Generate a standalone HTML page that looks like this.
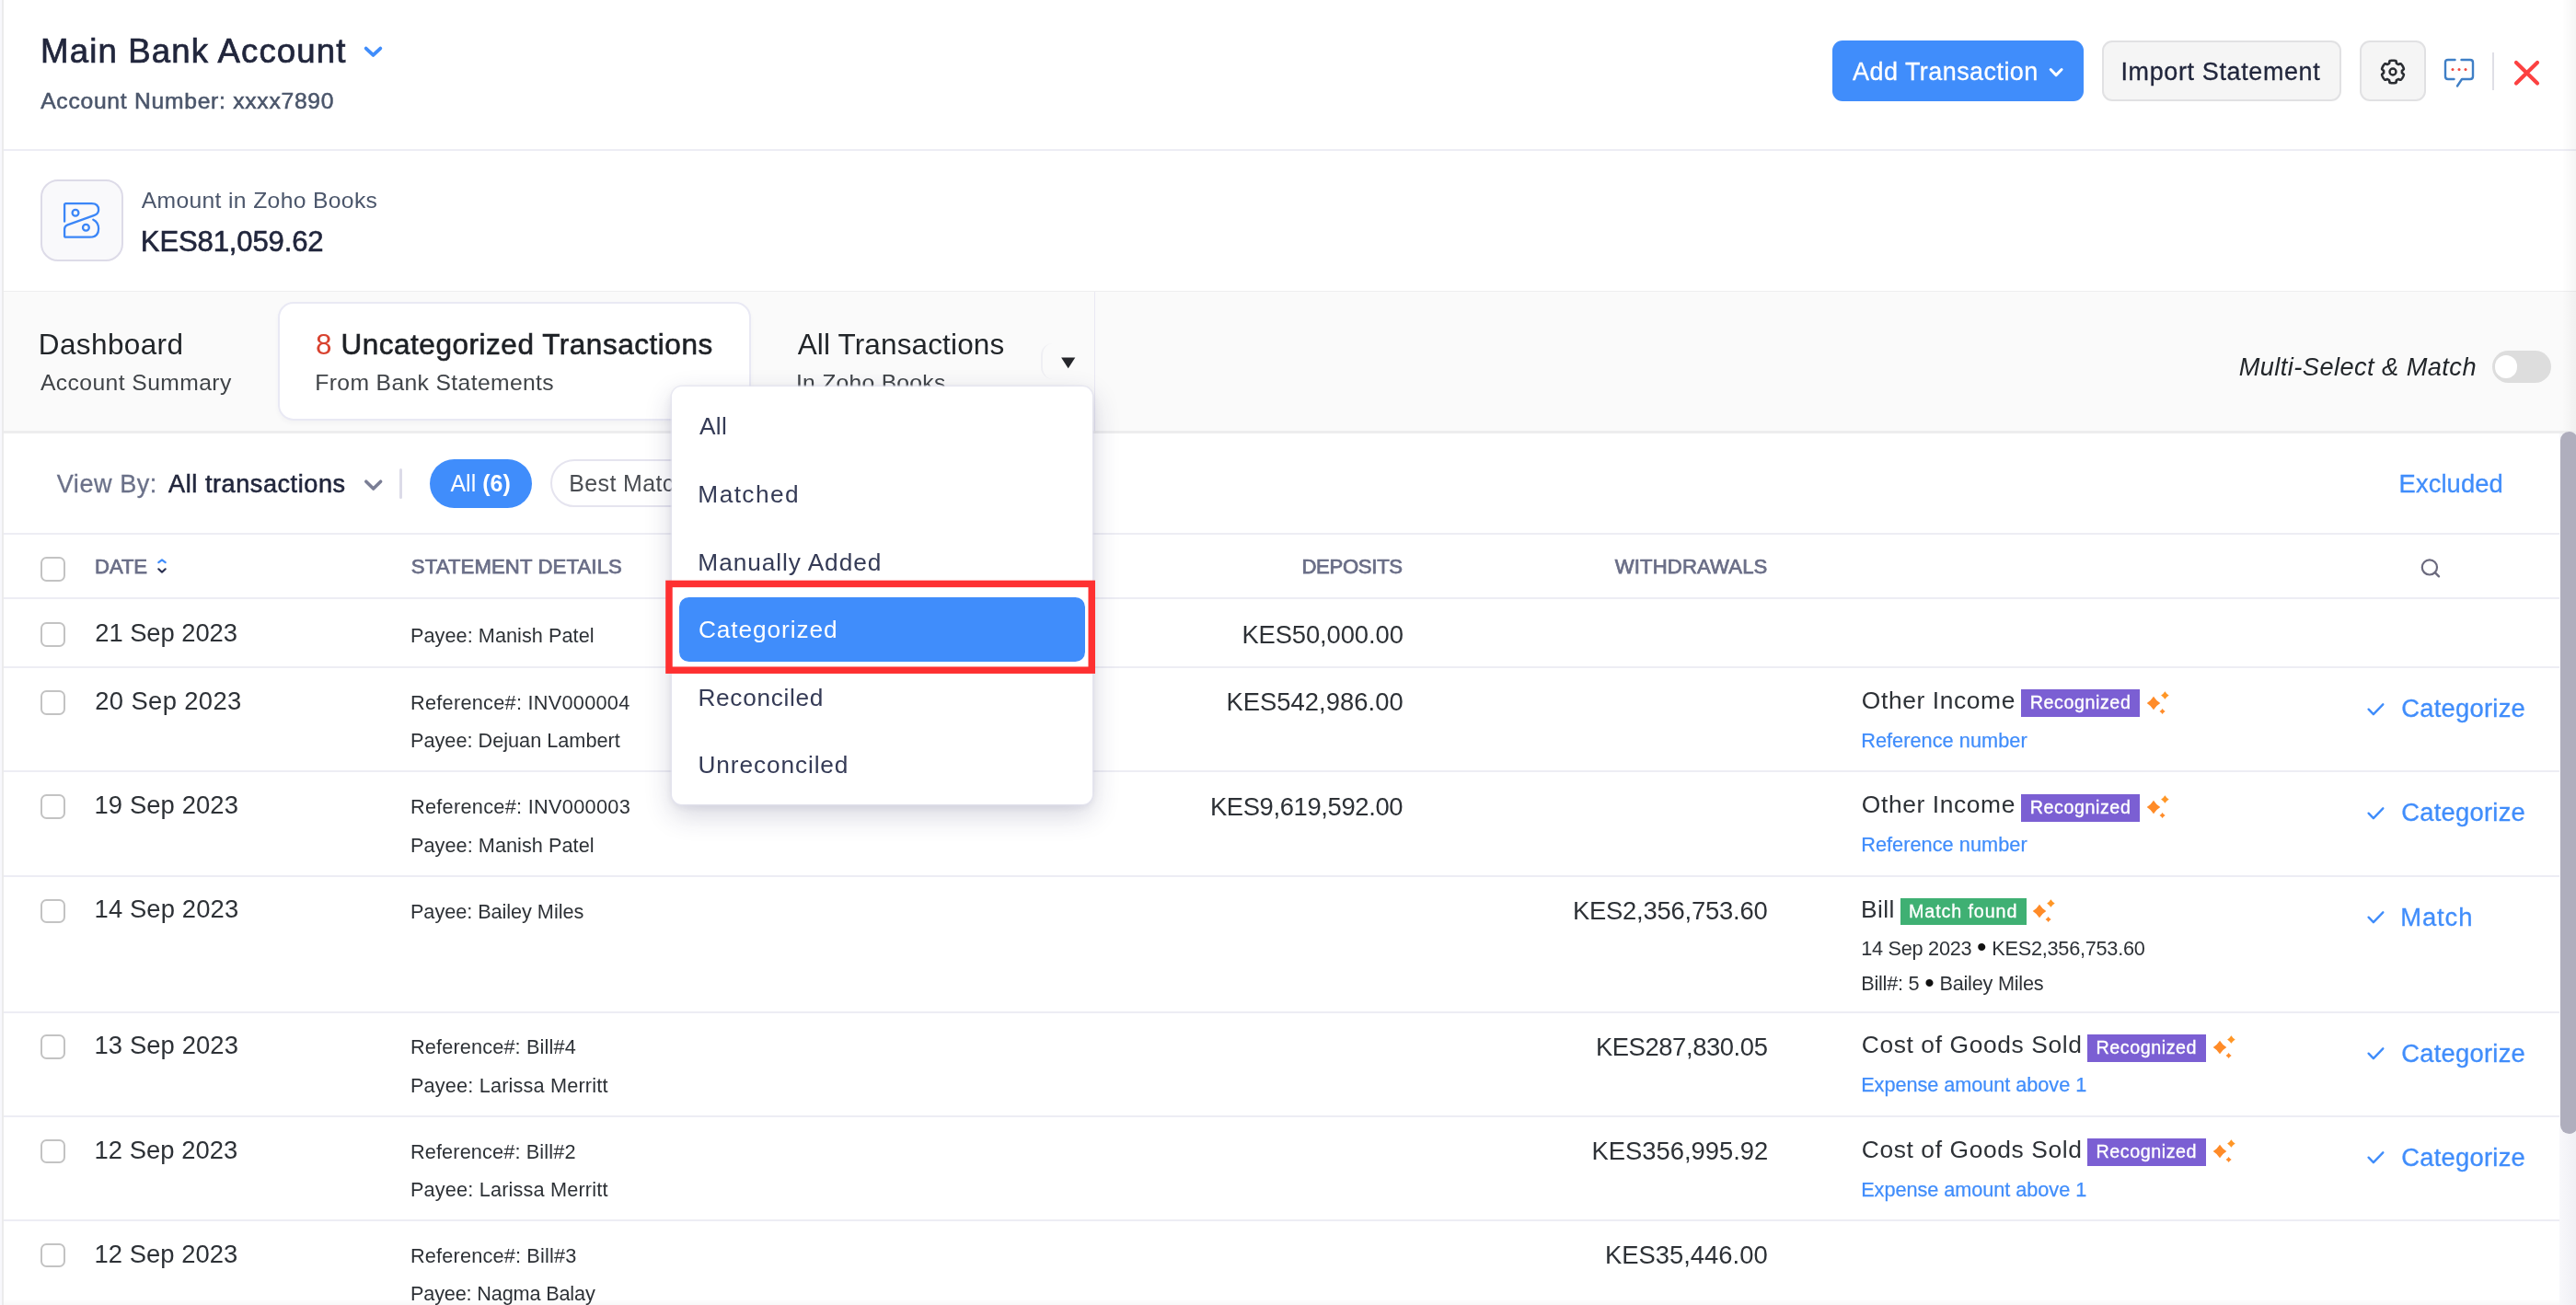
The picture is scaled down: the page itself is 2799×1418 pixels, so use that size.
<!DOCTYPE html>
<html lang="en"><head><meta charset="utf-8"><title>Main Bank Account - Uncategorized Transactions</title>
<style>
html,body{margin:0;padding:0;background:#fff}
body{width:2799px;height:1418px;overflow:hidden;position:relative;font-family:"Liberation Sans", Arial, sans-serif}
#app{will-change:transform;position:absolute;left:0;top:0;width:2799px;height:1418px;overflow:hidden}
#app div,#app svg{position:absolute}
#app .t{white-space:nowrap}
</style></head><body><div id="app">
<div style="left:0.0px;top:0.0px;width:2.2px;height:1418.0px;background:#f8f8fc"></div>
<div style="left:2.2px;top:0.0px;width:1.8px;height:1418.0px;background:#ebebec"></div>
<div style="left:4.0px;top:162.0px;width:2795.0px;height:2.0px;background:#ededf4"></div>
<div style="left:4.0px;top:315.5px;width:2795.0px;height:1.5px;background:#eeeeef"></div>
<div style="left:4.0px;top:317.0px;width:2795.0px;height:151.0px;background:#fafafa"></div>
<div style="left:4.0px;top:468.0px;width:2795.0px;height:3.0px;background:#ededee"></div>
<div style="left:1188.6px;top:317.0px;width:1.6px;height:151.0px;background:#e9e8f3"></div>
<div style="left:302.0px;top:327.5px;width:513.5px;height:129.3px;background:#fff;border:2px solid #e9e9f4;border-radius:17px;box-sizing:border-box;box-shadow:0 3px 5px rgba(60,60,90,.035)"></div>
<div style="left:4.0px;top:579.0px;width:2777.5px;height:2.0px;background:#ededf4"></div>
<div style="left:4.0px;top:649.0px;width:2777.5px;height:2.0px;background:#ededf4"></div>
<div style="left:4.0px;top:724.0px;width:2777.5px;height:2.0px;background:#ededf4"></div>
<div style="left:4.0px;top:837.0px;width:2777.5px;height:2.0px;background:#ededf4"></div>
<div style="left:4.0px;top:951.0px;width:2777.5px;height:2.0px;background:#ededf4"></div>
<div style="left:4.0px;top:1099.0px;width:2777.5px;height:2.0px;background:#ededf4"></div>
<div style="left:4.0px;top:1212.0px;width:2777.5px;height:2.0px;background:#ededf4"></div>
<div style="left:4.0px;top:1325.0px;width:2777.5px;height:2.0px;background:#ededf4"></div>
<div style="left:2784.0px;top:0.0px;width:15.0px;height:468.0px;background:linear-gradient(90deg,rgba(0,0,0,0),rgba(0,0,0,0.04))"></div>
<div style="left:2781.0px;top:471.0px;width:18.0px;height:947.0px;background:linear-gradient(90deg,#f8f8fb,#f0f0f5)"></div>
<div style="left:2781.6px;top:469.0px;width:19.0px;height:763.0px;background:#afaebd;border-radius:9.5px"></div>
<div style="left:4.0px;top:1411.0px;width:2777.0px;height:7.0px;background:linear-gradient(180deg,rgba(0,0,0,0),rgba(0,0,0,0.022))"></div>
<svg style="left:394.0px;top:48.0px" width="24" height="18" viewBox="0 0 24 18" fill="none"><path d="M3.7 4.6 L11.5 11.9 L19.3 4.6" stroke="#408dfb" stroke-width="3.8" stroke-linecap="round" stroke-linejoin="round"/></svg>
<div style="left:1990.7px;top:44.3px;width:273.0px;height:66.0px;background:#408dfb;border-radius:11px"></div>
<svg style="left:2225.0px;top:71.0px" width="20" height="14" viewBox="0 0 20 14" fill="none"><path d="M3.2 4.5 L9.1 10.6 L15.1 4.5" stroke="#fff" stroke-width="3" stroke-linecap="round" stroke-linejoin="round"/></svg>
<div style="left:2284.0px;top:44.3px;width:259.5px;height:66.0px;background:#f5f5f5;border:2px solid #e1e1e3;border-radius:11px;box-sizing:border-box"></div>
<div style="left:2564.0px;top:44.3px;width:71.5px;height:66.0px;background:#f5f5f5;border:2px solid #e1e1e3;border-radius:11px;box-sizing:border-box"></div>
<svg style="left:2582.5px;top:61.0px" width="34" height="34" viewBox="0 0 34 34" fill="none"><path d="M26.90 17.00 L26.90 16.74 L26.89 16.48 L26.87 16.22 L26.87 15.96 L27.09 15.67 L27.51 15.34 L28.03 14.96 L28.51 14.55 L28.82 14.16 L28.88 13.82 L28.79 13.51 L28.70 13.20 L28.59 12.89 L28.48 12.59 L28.36 12.29 L28.24 12.00 L28.10 11.70 L27.96 11.42 L27.81 11.13 L27.65 10.85 L27.49 10.57 L27.32 10.30 L27.14 10.03 L26.95 9.77 L26.76 9.51 L26.56 9.26 L26.35 9.01 L26.14 8.77 L25.92 8.53 L25.70 8.30 L25.37 8.18 L24.87 8.26 L24.29 8.47 L23.70 8.73 L23.19 8.93 L22.83 8.97 L22.61 8.84 L22.39 8.70 L22.17 8.56 L21.95 8.43 L21.72 8.30 L21.49 8.18 L21.26 8.06 L21.04 7.93 L20.89 7.60 L20.81 7.07 L20.74 6.43 L20.64 5.81 L20.45 5.34 L20.18 5.12 L19.87 5.04 L19.56 4.97 L19.24 4.91 L18.92 4.85 L18.61 4.81 L18.29 4.77 L17.97 4.74 L17.64 4.72 L17.32 4.70 L17.00 4.70 L16.68 4.70 L16.36 4.72 L16.03 4.74 L15.71 4.77 L15.39 4.81 L15.08 4.85 L14.76 4.91 L14.44 4.97 L14.13 5.04 L13.82 5.12 L13.55 5.34 L13.36 5.81 L13.26 6.43 L13.19 7.07 L13.11 7.60 L12.96 7.93 L12.74 8.06 L12.51 8.18 L12.28 8.30 L12.05 8.43 L11.83 8.56 L11.61 8.70 L11.39 8.84 L11.17 8.97 L10.81 8.93 L10.30 8.73 L9.71 8.47 L9.13 8.26 L8.63 8.18 L8.30 8.30 L8.08 8.53 L7.86 8.77 L7.65 9.01 L7.44 9.26 L7.24 9.51 L7.05 9.77 L6.86 10.03 L6.68 10.30 L6.51 10.57 L6.35 10.85 L6.19 11.13 L6.04 11.42 L5.90 11.70 L5.76 12.00 L5.64 12.29 L5.52 12.59 L5.41 12.89 L5.30 13.20 L5.21 13.51 L5.12 13.82 L5.18 14.16 L5.49 14.55 L5.97 14.96 L6.49 15.34 L6.91 15.67 L7.13 15.96 L7.13 16.22 L7.11 16.48 L7.10 16.74 L7.10 17.00 L7.10 17.26 L7.11 17.52 L7.13 17.78 L7.13 18.04 L6.91 18.33 L6.49 18.66 L5.97 19.04 L5.49 19.45 L5.18 19.84 L5.12 20.18 L5.21 20.49 L5.30 20.80 L5.41 21.11 L5.52 21.41 L5.64 21.71 L5.76 22.00 L5.90 22.30 L6.04 22.58 L6.19 22.87 L6.35 23.15 L6.51 23.43 L6.68 23.70 L6.86 23.97 L7.05 24.23 L7.24 24.49 L7.44 24.74 L7.65 24.99 L7.86 25.23 L8.08 25.47 L8.30 25.70 L8.63 25.82 L9.13 25.74 L9.71 25.53 L10.30 25.27 L10.81 25.07 L11.17 25.03 L11.39 25.16 L11.61 25.30 L11.83 25.44 L12.05 25.57 L12.28 25.70 L12.51 25.82 L12.74 25.94 L12.96 26.07 L13.11 26.40 L13.19 26.93 L13.26 27.57 L13.36 28.19 L13.55 28.66 L13.82 28.88 L14.13 28.96 L14.44 29.03 L14.76 29.09 L15.08 29.15 L15.39 29.19 L15.71 29.23 L16.03 29.26 L16.36 29.28 L16.68 29.30 L17.00 29.30 L17.32 29.30 L17.64 29.28 L17.97 29.26 L18.29 29.23 L18.61 29.19 L18.92 29.15 L19.24 29.09 L19.56 29.03 L19.87 28.96 L20.18 28.88 L20.45 28.66 L20.64 28.19 L20.74 27.57 L20.81 26.93 L20.89 26.40 L21.04 26.07 L21.26 25.94 L21.49 25.82 L21.72 25.70 L21.95 25.57 L22.17 25.44 L22.39 25.30 L22.61 25.16 L22.83 25.03 L23.19 25.07 L23.70 25.27 L24.29 25.53 L24.87 25.74 L25.37 25.82 L25.70 25.70 L25.92 25.47 L26.14 25.23 L26.35 24.99 L26.56 24.74 L26.76 24.49 L26.95 24.23 L27.14 23.97 L27.32 23.70 L27.49 23.43 L27.65 23.15 L27.81 22.87 L27.96 22.58 L28.10 22.30 L28.24 22.00 L28.36 21.71 L28.48 21.41 L28.59 21.11 L28.70 20.80 L28.79 20.49 L28.88 20.18 L28.82 19.84 L28.51 19.45 L28.03 19.04 L27.51 18.66 L27.09 18.33 L26.87 18.04 L26.87 17.78 L26.89 17.52 L26.90 17.26 Z" stroke="#2a2d32" stroke-width="2.6" stroke-linejoin="round"/><circle cx="17" cy="17" r="3.5" stroke="#2a2d32" stroke-width="2.4"/></svg>
<svg style="left:2654.5px;top:62.5px" width="34" height="33" viewBox="0 0 34 33" fill="none"><path d="M12.5 2 H5 Q2 2 2 5 V20 Q2 23 5 23 H11.5" stroke="#3f7fc6" stroke-width="2.4" stroke-linecap="round"/><path d="M19.5 2 H29 Q32 2 32 5 V20 Q32 23 29 23 H20 L15 30.5" stroke="#3f7fc6" stroke-width="2.4" stroke-linecap="round" stroke-linejoin="round"/><circle cx="10" cy="12.5" r="1.5" fill="#f0483e"/><circle cx="17" cy="12.5" r="1.5" fill="#f0483e"/><circle cx="24" cy="12.5" r="1.5" fill="#f0483e"/></svg>
<div style="left:2707.7px;top:56.5px;width:2.0px;height:41.5px;background:#dfdfe6"></div>
<svg style="left:2730.0px;top:64.0px" width="32" height="32" viewBox="0 0 32 32" fill="none"><path d="M4 4 L27 26.5 M27 4 L4 26.5" stroke="#fc4141" stroke-width="4.2" stroke-linecap="round"/></svg>
<div style="left:44.0px;top:194.5px;width:89.5px;height:89.5px;background:#f9f9fb;border:2px solid #dddbe8;border-radius:19px;box-sizing:border-box"></div>
<svg style="left:60.0px;top:210.0px" width="60" height="60" viewBox="60 210 60 60" fill="none"><path d="M70.1 240.7 V222.6 Q70.1 221.1 71.6 221.1 H99.5 Q107.1 221.1 107.1 228 Q107.1 232.3 102.6 233.9 L73.4 244.3 Q70.1 245.5 70.1 249 V256.2 Q70.1 257.7 71.6 257.7 H97.5 Q107.1 257.7 107.1 248.5 Q107.1 241.5 101.3 238.7" stroke="#3b86f7" stroke-width="2.3" stroke-linecap="round" stroke-linejoin="round"/><circle cx="82" cy="231.3" r="3.4" stroke="#3b86f7" stroke-width="2.3"/><circle cx="93.4" cy="247.3" r="3.4" stroke="#3b86f7" stroke-width="2.3"/></svg>
<svg style="left:1151.0px;top:386.0px" width="20" height="16" viewBox="0 0 20 16" fill="none"><path d="M2.1 2.5 H17.3 L9.7 14.2 Z" fill="#25262b"/></svg>
<div style="left:1130.5px;top:373.0px;width:15.5px;height:39.0px;border-left:2px solid #efeff3;border-radius:13px 0 0 13px;box-sizing:border-box"></div>
<div style="left:2707.5px;top:380.5px;width:64.2px;height:35.8px;background:#dddddd;border-radius:19px"></div>
<div style="left:2711.3px;top:386.4px;width:24.2px;height:24.3px;background:#fff;border-radius:13px"></div>
<svg style="left:394.0px;top:517.0px" width="24" height="18" viewBox="0 0 24 18" fill="none"><path d="M3.8 6.2 L11.7 14 L19.6 6.2" stroke="#7a7e95" stroke-width="3.6" stroke-linecap="round" stroke-linejoin="round"/></svg>
<div style="left:434.0px;top:508.5px;width:3.3px;height:33.5px;background:#dcdbe8;border-radius:2px"></div>
<div style="left:467.3px;top:498.9px;width:110.4px;height:53.4px;background:#408dfb;border-radius:27px"></div>
<div style="left:598.2px;top:499.3px;width:201.8px;height:52.0px;background:#fff;border:2px solid #e5e4ef;border-radius:27px;box-sizing:border-box"></div>
<div style="left:44.0px;top:604.9px;width:27.0px;height:26.8px;background:#fff;border:2px solid #c3c3c3;border-radius:6.5px;box-sizing:border-box"></div>
<svg style="left:168.6px;top:604.5px" width="14" height="22" viewBox="0 0 14 22" fill="none"><path d="M3.3 6.1 L7 3.3 L10.7 6.1" stroke="#408dfb" stroke-width="2.2" stroke-linecap="round" stroke-linejoin="round"/><path d="M3.3 13.3 L7 16.7 L10.7 13.3" stroke="#2b3050" stroke-width="2.2" stroke-linecap="round" stroke-linejoin="round"/></svg>
<svg style="left:2628.0px;top:604.0px" width="26" height="26" viewBox="0 0 26 26" fill="none"><circle cx="11.9" cy="12.4" r="8.1" stroke="#6b6a7e" stroke-width="2.2"/><path d="M17.8 18.2 L22 22.3" stroke="#6b6a7e" stroke-width="2.4" stroke-linecap="round"/></svg>
<div style="left:44.0px;top:675.8px;width:27.0px;height:26.8px;background:#fff;border:2px solid #c3c3c3;border-radius:6.5px;box-sizing:border-box"></div>
<div style="left:44.0px;top:749.8px;width:27.0px;height:26.8px;background:#fff;border:2px solid #c3c3c3;border-radius:6.5px;box-sizing:border-box"></div>
<div style="left:2196.3px;top:749.3px;width:128.5px;height:30.0px;background:#7b5fd3"></div>
<svg style="left:2331.8px;top:750.5px" width="28" height="26" viewBox="0 -1 28 26" fill="none"><path d="M8 4.7 Q10.77 9.23 15.3 12 Q10.77 14.77 8 19.3 Q5.23 14.77 0.7000000000000002 12 Q5.23 9.23 8 4.7 Z" fill="#ff8b28"/><path d="M20.4 -0.7999999999999998 Q22.03 1.87 24.7 3.5 Q22.03 5.13 20.4 7.8 Q18.77 5.13 16.099999999999998 3.5 Q18.77 1.87 20.4 -0.7999999999999998 Z" fill="#ff9727"/><path d="M17.6 17.9 Q18.78 19.82 20.700000000000003 21 Q18.78 22.18 17.6 24.1 Q16.42 22.18 14.500000000000002 21 Q16.42 19.82 17.6 17.9 Z" fill="#ff8b28"/></svg>
<svg style="left:2570.0px;top:762.5px" width="22" height="18" viewBox="0 0 22 18" fill="none"><path d="M3.6 7.7 L8.9 13.2 L19.3 2.3" stroke="#408dfb" stroke-width="2.4" stroke-linecap="round" stroke-linejoin="round"/></svg>
<div style="left:44.0px;top:863.1px;width:27.0px;height:26.8px;background:#fff;border:2px solid #c3c3c3;border-radius:6.5px;box-sizing:border-box"></div>
<div style="left:2196.3px;top:862.6px;width:128.5px;height:30.0px;background:#7b5fd3"></div>
<svg style="left:2331.8px;top:863.8px" width="28" height="26" viewBox="0 -1 28 26" fill="none"><path d="M8 4.7 Q10.77 9.23 15.3 12 Q10.77 14.77 8 19.3 Q5.23 14.77 0.7000000000000002 12 Q5.23 9.23 8 4.7 Z" fill="#ff8b28"/><path d="M20.4 -0.7999999999999998 Q22.03 1.87 24.7 3.5 Q22.03 5.13 20.4 7.8 Q18.77 5.13 16.099999999999998 3.5 Q18.77 1.87 20.4 -0.7999999999999998 Z" fill="#ff9727"/><path d="M17.6 17.9 Q18.78 19.82 20.700000000000003 21 Q18.78 22.18 17.6 24.1 Q16.42 22.18 14.500000000000002 21 Q16.42 19.82 17.6 17.9 Z" fill="#ff8b28"/></svg>
<svg style="left:2570.0px;top:875.8px" width="22" height="18" viewBox="0 0 22 18" fill="none"><path d="M3.6 7.7 L8.9 13.2 L19.3 2.3" stroke="#408dfb" stroke-width="2.4" stroke-linecap="round" stroke-linejoin="round"/></svg>
<div style="left:44.0px;top:976.5px;width:27.0px;height:26.8px;background:#fff;border:2px solid #c3c3c3;border-radius:6.5px;box-sizing:border-box"></div>
<div style="left:2065.0px;top:976.1px;width:136.5px;height:29.2px;background:#3fb073"></div>
<svg style="left:2208.3px;top:977.2px" width="28" height="26" viewBox="0 -1 28 26" fill="none"><path d="M8 4.7 Q10.77 9.23 15.3 12 Q10.77 14.77 8 19.3 Q5.23 14.77 0.7000000000000002 12 Q5.23 9.23 8 4.7 Z" fill="#ff8b28"/><path d="M20.4 -0.7999999999999998 Q22.03 1.87 24.7 3.5 Q22.03 5.13 20.4 7.8 Q18.77 5.13 16.099999999999998 3.5 Q18.77 1.87 20.4 -0.7999999999999998 Z" fill="#ff9727"/><path d="M17.6 17.9 Q18.78 19.82 20.700000000000003 21 Q18.78 22.18 17.6 24.1 Q16.42 22.18 14.500000000000002 21 Q16.42 19.82 17.6 17.9 Z" fill="#ff8b28"/></svg>
<svg style="left:2570.0px;top:989.2px" width="22" height="18" viewBox="0 0 22 18" fill="none"><path d="M3.6 7.7 L8.9 13.2 L19.3 2.3" stroke="#408dfb" stroke-width="2.4" stroke-linecap="round" stroke-linejoin="round"/></svg>
<div style="left:44.0px;top:1124.3px;width:27.0px;height:26.8px;background:#fff;border:2px solid #c3c3c3;border-radius:6.5px;box-sizing:border-box"></div>
<div style="left:2268.0px;top:1123.8px;width:128.5px;height:30.0px;background:#7b5fd3"></div>
<svg style="left:2403.5px;top:1125.0px" width="28" height="26" viewBox="0 -1 28 26" fill="none"><path d="M8 4.7 Q10.77 9.23 15.3 12 Q10.77 14.77 8 19.3 Q5.23 14.77 0.7000000000000002 12 Q5.23 9.23 8 4.7 Z" fill="#ff8b28"/><path d="M20.4 -0.7999999999999998 Q22.03 1.87 24.7 3.5 Q22.03 5.13 20.4 7.8 Q18.77 5.13 16.099999999999998 3.5 Q18.77 1.87 20.4 -0.7999999999999998 Z" fill="#ff9727"/><path d="M17.6 17.9 Q18.78 19.82 20.700000000000003 21 Q18.78 22.18 17.6 24.1 Q16.42 22.18 14.500000000000002 21 Q16.42 19.82 17.6 17.9 Z" fill="#ff8b28"/></svg>
<svg style="left:2570.0px;top:1137.0px" width="22" height="18" viewBox="0 0 22 18" fill="none"><path d="M3.6 7.7 L8.9 13.2 L19.3 2.3" stroke="#408dfb" stroke-width="2.4" stroke-linecap="round" stroke-linejoin="round"/></svg>
<div style="left:44.0px;top:1237.6px;width:27.0px;height:26.8px;background:#fff;border:2px solid #c3c3c3;border-radius:6.5px;box-sizing:border-box"></div>
<div style="left:2268.0px;top:1237.1px;width:128.5px;height:30.0px;background:#7b5fd3"></div>
<svg style="left:2403.5px;top:1238.3px" width="28" height="26" viewBox="0 -1 28 26" fill="none"><path d="M8 4.7 Q10.77 9.23 15.3 12 Q10.77 14.77 8 19.3 Q5.23 14.77 0.7000000000000002 12 Q5.23 9.23 8 4.7 Z" fill="#ff8b28"/><path d="M20.4 -0.7999999999999998 Q22.03 1.87 24.7 3.5 Q22.03 5.13 20.4 7.8 Q18.77 5.13 16.099999999999998 3.5 Q18.77 1.87 20.4 -0.7999999999999998 Z" fill="#ff9727"/><path d="M17.6 17.9 Q18.78 19.82 20.700000000000003 21 Q18.78 22.18 17.6 24.1 Q16.42 22.18 14.500000000000002 21 Q16.42 19.82 17.6 17.9 Z" fill="#ff8b28"/></svg>
<svg style="left:2570.0px;top:1250.3px" width="22" height="18" viewBox="0 0 22 18" fill="none"><path d="M3.6 7.7 L8.9 13.2 L19.3 2.3" stroke="#408dfb" stroke-width="2.4" stroke-linecap="round" stroke-linejoin="round"/></svg>
<div style="left:44.0px;top:1350.6px;width:27.0px;height:26.8px;background:#fff;border:2px solid #c3c3c3;border-radius:6.5px;box-sizing:border-box"></div>
<div class="t" style="left:103.28px;top:674.20px;font-size:27.38px;line-height:27.38px;color:#2d3136;letter-spacing:-0.055px;">21 Sep 2023</div>
<div class="t" style="left:445.96px;top:679.60px;font-size:21.7px;line-height:21.7px;color:#2d3136;letter-spacing:0.041px;">Payee: Manish Patel</div>
<div class="t" style="left:1349.38px;top:675.60px;font-size:27.38px;line-height:27.38px;color:#2d3136;letter-spacing:-0.098px;">KES50,000.00</div>
<div class="t" style="left:103.28px;top:747.90px;font-size:27.38px;line-height:27.38px;color:#2d3136;letter-spacing:0.366px;">20 Sep 2023</div>
<div class="t" style="left:445.96px;top:752.90px;font-size:21.7px;line-height:21.7px;color:#2d3136;letter-spacing:0.281px;">Reference#: INV000004</div>
<div class="t" style="left:445.96px;top:794.20px;font-size:21.7px;line-height:21.7px;color:#2d3136;letter-spacing:-0.001px;">Payee: Dejuan Lambert</div>
<div class="t" style="left:1332.48px;top:749.30px;font-size:27.38px;line-height:27.38px;color:#2d3136;letter-spacing:0.033px;">KES542,986.00</div>
<div class="t" style="left:2022.87px;top:747.90px;font-size:26.38px;line-height:26.38px;color:#2d3136;letter-spacing:0.605px;">Other Income</div>
<div class="t" style="left:2205.77px;top:754.40px;font-size:19.72px;line-height:19.72px;color:#fff;letter-spacing:0.557px;-webkit-text-stroke:0.35px #fff;">Recognized</div>
<div class="t" style="left:2022.18px;top:793.90px;font-size:21.7px;line-height:21.7px;color:#408dfb;letter-spacing:0.055px;-webkit-text-stroke:0.25px #408dfb;">Reference number</div>
<div class="t" style="left:2609.17px;top:756.00px;font-size:27.38px;line-height:27.38px;color:#408dfb;letter-spacing:0.253px;-webkit-text-stroke:0.3px #408dfb;">Categorize</div>
<div class="t" style="left:102.52px;top:861.20px;font-size:27.38px;line-height:27.38px;color:#2d3136;letter-spacing:0.111px;">19 Sep 2023</div>
<div class="t" style="left:445.96px;top:866.20px;font-size:21.7px;line-height:21.7px;color:#2d3136;letter-spacing:0.302px;">Reference#: INV000003</div>
<div class="t" style="left:445.96px;top:907.50px;font-size:21.7px;line-height:21.7px;color:#2d3136;letter-spacing:0.041px;">Payee: Manish Patel</div>
<div class="t" style="left:1314.88px;top:862.60px;font-size:27.38px;line-height:27.38px;color:#2d3136;letter-spacing:-0.358px;">KES9,619,592.00</div>
<div class="t" style="left:2022.87px;top:861.20px;font-size:26.38px;line-height:26.38px;color:#2d3136;letter-spacing:0.605px;">Other Income</div>
<div class="t" style="left:2205.77px;top:867.70px;font-size:19.72px;line-height:19.72px;color:#fff;letter-spacing:0.557px;-webkit-text-stroke:0.35px #fff;">Recognized</div>
<div class="t" style="left:2022.18px;top:907.20px;font-size:21.7px;line-height:21.7px;color:#408dfb;letter-spacing:0.055px;-webkit-text-stroke:0.25px #408dfb;">Reference number</div>
<div class="t" style="left:2609.17px;top:869.30px;font-size:27.38px;line-height:27.38px;color:#408dfb;letter-spacing:0.253px;-webkit-text-stroke:0.3px #408dfb;">Categorize</div>
<div class="t" style="left:102.52px;top:974.10px;font-size:27.38px;line-height:27.38px;color:#2d3136;letter-spacing:0.136px;">14 Sep 2023</div>
<div class="t" style="left:445.96px;top:979.60px;font-size:21.7px;line-height:21.7px;color:#2d3136;letter-spacing:-0.052px;">Payee: Bailey Miles</div>
<div class="t" style="left:1708.88px;top:976.00px;font-size:27.38px;line-height:27.38px;color:#2d3136;letter-spacing:-0.200px;">KES2,356,753.60</div>
<div class="t" style="left:2021.95px;top:974.60px;font-size:26.38px;line-height:26.38px;color:#2d3136;letter-spacing:0.391px;">Bill</div>
<div class="t" style="left:2074.07px;top:981.10px;font-size:19.72px;line-height:19.72px;color:#fff;letter-spacing:0.887px;-webkit-text-stroke:0.35px #fff;">Match found</div>
<div class="t" style="left:2022.18px;top:1019.50px;font-size:21.7px;line-height:21.7px;color:#2d3136;letter-spacing:-0.259px;">14 Sep 2023 <span style="font-size:1.38em;line-height:0;position:relative;top:0.06em;letter-spacing:0;color:#111">•</span> KES2,356,753.60</div>
<div class="t" style="left:2022.16px;top:1057.80px;font-size:21.7px;line-height:21.7px;color:#2d3136;letter-spacing:-0.233px;">Bill#: 5 <span style="font-size:1.38em;line-height:0;position:relative;top:0.06em;letter-spacing:0;color:#111">•</span> Bailey Miles</div>
<div class="t" style="left:2608.30px;top:982.70px;font-size:27.38px;line-height:27.38px;color:#408dfb;letter-spacing:0.897px;-webkit-text-stroke:0.3px #408dfb;">Match</div>
<div class="t" style="left:102.52px;top:1122.40px;font-size:27.38px;line-height:27.38px;color:#2d3136;letter-spacing:0.111px;">13 Sep 2023</div>
<div class="t" style="left:445.96px;top:1127.40px;font-size:21.7px;line-height:21.7px;color:#2d3136;letter-spacing:0.153px;">Reference#: Bill#4</div>
<div class="t" style="left:445.96px;top:1168.70px;font-size:21.7px;line-height:21.7px;color:#2d3136;letter-spacing:0.169px;">Payee: Larissa Merritt</div>
<div class="t" style="left:1733.88px;top:1123.80px;font-size:27.38px;line-height:27.38px;color:#2d3136;letter-spacing:-0.400px;">KES287,830.05</div>
<div class="t" style="left:2022.78px;top:1122.40px;font-size:26.38px;line-height:26.38px;color:#2d3136;letter-spacing:0.609px;">Cost of Goods Sold</div>
<div class="t" style="left:2277.47px;top:1128.90px;font-size:19.72px;line-height:19.72px;color:#fff;letter-spacing:0.557px;-webkit-text-stroke:0.35px #fff;">Recognized</div>
<div class="t" style="left:2022.18px;top:1168.40px;font-size:21.7px;line-height:21.7px;color:#408dfb;letter-spacing:-0.044px;-webkit-text-stroke:0.25px #408dfb;">Expense amount above 1</div>
<div class="t" style="left:2609.17px;top:1130.50px;font-size:27.38px;line-height:27.38px;color:#408dfb;letter-spacing:0.253px;-webkit-text-stroke:0.3px #408dfb;">Categorize</div>
<div class="t" style="left:102.52px;top:1235.70px;font-size:27.38px;line-height:27.38px;color:#2d3136;letter-spacing:0.036px;">12 Sep 2023</div>
<div class="t" style="left:445.96px;top:1240.70px;font-size:21.7px;line-height:21.7px;color:#2d3136;letter-spacing:0.136px;">Reference#: Bill#2</div>
<div class="t" style="left:445.96px;top:1282.00px;font-size:21.7px;line-height:21.7px;color:#2d3136;letter-spacing:0.169px;">Payee: Larissa Merritt</div>
<div class="t" style="left:1729.38px;top:1237.10px;font-size:27.38px;line-height:27.38px;color:#2d3136;letter-spacing:0.009px;">KES356,995.92</div>
<div class="t" style="left:2022.78px;top:1235.70px;font-size:26.38px;line-height:26.38px;color:#2d3136;letter-spacing:0.609px;">Cost of Goods Sold</div>
<div class="t" style="left:2277.47px;top:1242.20px;font-size:19.72px;line-height:19.72px;color:#fff;letter-spacing:0.557px;-webkit-text-stroke:0.35px #fff;">Recognized</div>
<div class="t" style="left:2022.18px;top:1281.70px;font-size:21.7px;line-height:21.7px;color:#408dfb;letter-spacing:-0.044px;-webkit-text-stroke:0.25px #408dfb;">Expense amount above 1</div>
<div class="t" style="left:2609.17px;top:1243.80px;font-size:27.38px;line-height:27.38px;color:#408dfb;letter-spacing:0.253px;-webkit-text-stroke:0.3px #408dfb;">Categorize</div>
<div class="t" style="left:102.52px;top:1348.70px;font-size:27.38px;line-height:27.38px;color:#2d3136;letter-spacing:0.036px;">12 Sep 2023</div>
<div class="t" style="left:445.96px;top:1353.70px;font-size:21.7px;line-height:21.7px;color:#2d3136;letter-spacing:0.184px;">Reference#: Bill#3</div>
<div class="t" style="left:445.96px;top:1395.00px;font-size:21.7px;line-height:21.7px;color:#2d3136;letter-spacing:-0.174px;">Payee: Nagma Balay</div>
<div class="t" style="left:1743.88px;top:1350.10px;font-size:27.38px;line-height:27.38px;color:#2d3136;letter-spacing:0.023px;">KES35,446.00</div>
<div class="t" style="left:44.05px;top:38.30px;font-size:36.6px;line-height:36.6px;color:#21263c;letter-spacing:1.144px;-webkit-text-stroke:0.7px #21263c;">Main Bank Account</div>
<div class="t" style="left:44.17px;top:97.50px;font-size:24.68px;line-height:24.68px;color:#4b566b;letter-spacing:0.724px;-webkit-text-stroke:0.55px #4b566b;">Account Number: xxxx7890</div>
<div class="t" style="left:2013.10px;top:64.80px;font-size:26.95px;line-height:26.95px;color:#fff;letter-spacing:0.465px;-webkit-text-stroke:0.3px #fff;">Add Transaction</div>
<div class="t" style="left:2304.45px;top:64.80px;font-size:26.95px;line-height:26.95px;color:#21263c;letter-spacing:0.645px;-webkit-text-stroke:0.3px #21263c;">Import Statement</div>
<div class="t" style="left:153.68px;top:206.40px;font-size:24.68px;line-height:24.68px;color:#4b566b;letter-spacing:0.352px;">Amount in Zoho Books</div>
<div class="t" style="left:152.81px;top:246.60px;font-size:31.06px;line-height:31.06px;color:#21263c;letter-spacing:-0.129px;-webkit-text-stroke:0.6px #21263c;">KES81,059.62</div>
<div class="t" style="left:41.79px;top:358.60px;font-size:31.49px;line-height:31.49px;color:#212529;letter-spacing:0.402px;">Dashboard</div>
<div class="t" style="left:43.98px;top:404.40px;font-size:24.68px;line-height:24.68px;color:#404448;letter-spacing:0.415px;">Account Summary</div>
<div class="t" style="left:343.06px;top:358.60px;font-size:31.49px;line-height:31.49px;color:#1d2025;letter-spacing:0.542px;-webkit-text-stroke:0.6px #1d2025;"><span style="color:#d8422f;-webkit-text-stroke:0">8</span> Uncategorized Transactions</div>
<div class="t" style="left:342.34px;top:404.40px;font-size:24.68px;line-height:24.68px;color:#404448;letter-spacing:0.370px;">From Bank Statements</div>
<div class="t" style="left:866.67px;top:358.60px;font-size:31.49px;line-height:31.49px;color:#212529;letter-spacing:0.156px;">All Transactions</div>
<div class="t" style="left:864.95px;top:404.40px;font-size:24.68px;line-height:24.68px;color:#404448;letter-spacing:0.272px;">In Zoho Books</div>
<div class="t" style="left:2432.69px;top:384.70px;font-size:27.23px;line-height:27.23px;color:#22262a;letter-spacing:0.435px;font-style:italic;">Multi-Select &amp; Match</div>
<div class="t" style="left:61.75px;top:511.50px;font-size:27.09px;line-height:27.09px;color:#6b7189;letter-spacing:0.539px;-webkit-text-stroke:0.3px #6b7189;">View By:</div>
<div class="t" style="left:183.07px;top:511.50px;font-size:27.09px;line-height:27.09px;color:#21263c;letter-spacing:0.558px;-webkit-text-stroke:0.55px #21263c;">All transactions</div>
<div class="t" style="left:489.38px;top:512.70px;font-size:24.96px;line-height:24.96px;color:#fff;letter-spacing:0.040px;">All <span style="font-weight:700">(6)</span></div>
<div class="t" style="left:618.24px;top:512.70px;font-size:24.96px;line-height:24.96px;color:#4a4d52;letter-spacing:0.397px;">Best Match</div>
<div class="t" style="left:2606.60px;top:512.30px;font-size:27.38px;line-height:27.38px;color:#408dfb;letter-spacing:0.077px;-webkit-text-stroke:0.3px #408dfb;">Excluded</div>
<div class="t" style="left:103.09px;top:605.30px;font-size:22.13px;line-height:22.13px;color:#6a6e87;letter-spacing:-0.121px;-webkit-text-stroke:0.75px #6a6e87;">DATE</div>
<div class="t" style="left:446.75px;top:605.30px;font-size:22.13px;line-height:22.13px;color:#6a6e87;letter-spacing:0.128px;-webkit-text-stroke:0.75px #6a6e87;">STATEMENT DETAILS</div>
<div class="t" style="left:1414.39px;top:605.30px;font-size:22.13px;line-height:22.13px;color:#6a6e87;letter-spacing:-0.305px;-webkit-text-stroke:0.75px #6a6e87;">DEPOSITS</div>
<div class="t" style="left:1754.74px;top:605.30px;font-size:22.13px;line-height:22.13px;color:#6a6e87;letter-spacing:0.132px;-webkit-text-stroke:0.75px #6a6e87;">WITHDRAWALS</div>
<div style="left:730.2px;top:419.6px;width:456.8px;height:454.6px;background:#fff;border-radius:11px;box-shadow:0 0 0 1.5px rgba(228,228,240,.7),0 11px 30px rgba(40,40,90,.2),0 3px 10px rgba(40,40,90,.08)"></div>
<div style="left:738.2px;top:649.2px;width:440.4px;height:70px;background:#408dfb;border-radius:10.5px"></div>
<svg style="left:715px;top:622px" width="484" height="118" viewBox="715 622 484 118" fill="none"><rect x="726.95" y="634.4" width="459.3" height="93.8" stroke="#fe3031" stroke-width="7.5"/></svg>
<div class="t" style="left:759.88px;top:450.20px;font-size:26.24px;line-height:26.24px;color:#353b56;letter-spacing:0.380px;">All</div>
<div class="t" style="left:758.35px;top:524.40px;font-size:26.24px;line-height:26.24px;color:#353b56;letter-spacing:1.429px;">Matched</div>
<div class="t" style="left:758.35px;top:597.70px;font-size:26.24px;line-height:26.24px;color:#353b56;letter-spacing:0.944px;">Manually Added</div>
<div class="t" style="left:758.89px;top:671.30px;font-size:26.24px;line-height:26.24px;color:#fff;letter-spacing:0.921px;">Categorized</div>
<div class="t" style="left:758.45px;top:744.90px;font-size:26.24px;line-height:26.24px;color:#353b56;letter-spacing:0.685px;">Reconciled</div>
<div class="t" style="left:758.54px;top:818.40px;font-size:26.24px;line-height:26.24px;color:#353b56;letter-spacing:0.890px;">Unreconciled</div>
</div></body></html>
